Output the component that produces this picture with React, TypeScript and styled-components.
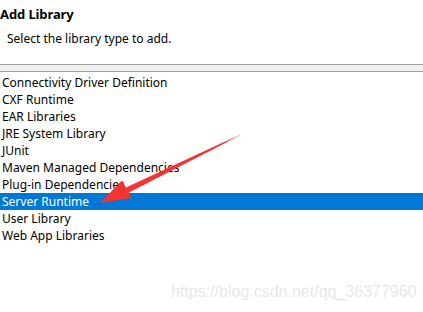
import React from "react";
import styled, { createGlobalStyle } from "styled-components";

const Global = createGlobalStyle`
  html, body { margin: 0; padding: 0; background: #fff; }
  body { width: 423px; height: 312px; overflow: hidden; font-family: "Noto Sans", "Open Sans", sans-serif; }
`;

const Page = styled.div`
  position: relative;
  width: 423px;
  height: 312px;
  background: #fff;
  display: flex;
  flex-direction: column;
`;

const Header = styled.div`
  display: flex;
  flex-direction: column;
  padding: 4px 0 0 0;
  height: 61px;
  box-sizing: border-box;
`;

const Title = styled.div`
  font-size: 13px;
  font-weight: 700;
  color: #000;
  line-height: 20px;
  letter-spacing: -0.1px;
`;

const Subtitle = styled.div`
  font-size: 12px;
  color: #000;
  line-height: 16px;
  padding-left: 7px;
  margin-top: 7px;
`;

const Separator = styled.div`
  height: 6px;
  border-top: 1px solid #a0a0a0;
  border-bottom: 1px solid #a0a0a0;
  background: #f0f0f0;
  margin-top: 3px;
`;

const List = styled.div`
  display: flex;
  flex-direction: column;
  padding-top: 2px;
`;

const Row = styled.div<{ $selected?: boolean }>`
  height: 17px;
  line-height: 17px;
  font-size: 12px;
  padding-left: 2px;
  color: ${(p) => (p.$selected ? "#fff" : "#000")};
  background: ${(p) => (p.$selected ? "#0078d7" : "transparent")};
  white-space: nowrap;
`;

const Arrow = styled.svg`
  position: absolute;
  left: 0;
  top: 0;
  pointer-events: none;
`;

const Watermark = styled.div`
  position: absolute;
  left: 171px;
  top: 283px;
  font-family: "Liberation Sans", Arial, sans-serif;
  font-size: 16px;
  color: #e8e8e8;
  white-space: nowrap;
`;

const items = [
  "Connectivity Driver Definition",
  "CXF Runtime",
  "EAR Libraries",
  "JRE System Library",
  "JUnit",
  "Maven Managed Dependencies",
  "Plug-in Dependencies",
  "Server Runtime",
  "User Library",
  "Web App Libraries",
];

export default function App() {
  return (
    <Page>
      <Global />
      <Header>
        <Title>Add Library</Title>
        <Subtitle>Select the library type to add.</Subtitle>
      </Header>
      <Separator />
      <List>
        {items.map((t) => (
          <Row key={t} $selected={t === "Server Runtime"}>
            {t}
          </Row>
        ))}
      </List>
      <Arrow width="423" height="312" viewBox="0 0 423 312">
        <defs>
          <linearGradient id="fade" x1="240" y1="135" x2="127" y2="190" gradientUnits="userSpaceOnUse">
            <stop offset="0" stopColor="#ff4040" stopOpacity="0.3" />
            <stop offset="0.15" stopColor="#f53333" stopOpacity="1" />
            <stop offset="1" stopColor="#f53333" stopOpacity="1" />
          </linearGradient>
        </defs>
        <polygon points="240,134.5 240,135.5 128,193 126,187.5" fill="url(#fade)" />
        <polygon points="100,203 132,198 122,180.5" fill="#f53333" />
      </Arrow>
      <Watermark>https://blog.csdn.net/qq_36377960</Watermark>
    </Page>
  );
}
